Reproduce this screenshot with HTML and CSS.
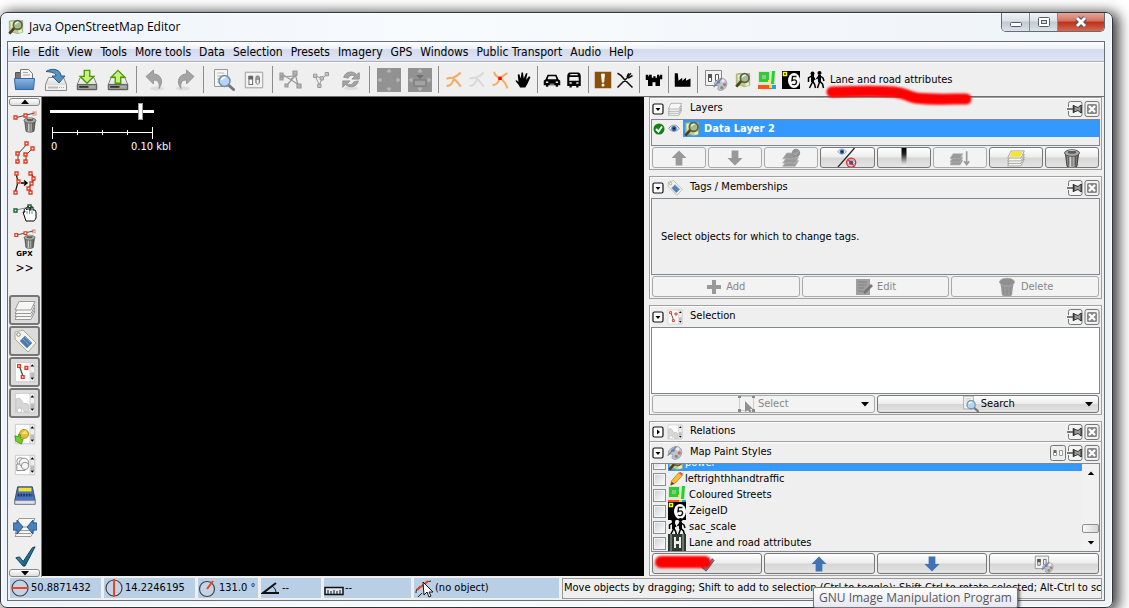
FILE: index.html
```html
<!DOCTYPE html>
<html lang="en">
<head>
<meta charset="utf-8">
<title>Java OpenStreetMap Editor</title>
<link rel="stylesheet" href="styles.css">
</head>
<body>
<svg class="sprite" aria-hidden="true">
  <defs>
    <linearGradient id="gBlue" x1="0" y1="0" x2="0" y2="1"><stop offset="0" stop-color="#8fb6e0"/><stop offset="1" stop-color="#4a80bd"/></linearGradient>
    <linearGradient id="gMetal" x1="0" y1="0" x2="1" y2="0"><stop offset="0" stop-color="#55574f"/><stop offset=".4" stop-color="#d8d9d2"/><stop offset="1" stop-color="#50524b"/></linearGradient>
    <linearGradient id="gDrive" x1="0" y1="0" x2="0" y2="1"><stop offset="0" stop-color="#fafafa"/><stop offset="1" stop-color="#c4c6c0"/></linearGradient>
    <linearGradient id="gFade" x1="0" y1="0" x2="0" y2="1"><stop offset="0" stop-color="#000"/><stop offset=".3" stop-color="#222"/><stop offset=".75" stop-color="#ccc"/><stop offset="1" stop-color="#fff"/></linearGradient>
    <linearGradient id="gTick" x1="0" y1="0" x2="1" y2="1"><stop offset="0" stop-color="#59b4d4"/><stop offset="1" stop-color="#043a5c"/></linearGradient>
  </defs>
  <symbol id="drive" viewBox="0 0 24 24"><path d="M4.500 9.500h15l3 7v6h-21v-6z" fill="url(#gDrive)" stroke="#777"/><path d="M1.500 17h21v5.500h-21z" fill="#9a9c96" stroke="#555"/><path d="M3.500 19.500h10" stroke="#333" stroke-width="2"/><path d="M15 19.500h6" stroke="#ddd" stroke-dasharray="1 1"/></symbol>
  <symbol id="folder" viewBox="0 0 24 24"><path d="M2.500 21V4.500h6l2 2h9V21z" fill="#777" stroke="#555"/><path d="M7.500 14V1.500h8l4 4V14z" fill="#f4f4f4" stroke="#777"/><path d="M10 4.500h5M10 7h7" stroke="#aaa"/><path d="M1.500 10.500h20l-1 11h-18z" fill="url(#gBlue)" stroke="#3465a4"/></symbol>
  <symbol id="opendrive" viewBox="0 0 24 24"><path d="M4.500 9.500h15l3 7v6h-21v-6z" fill="url(#gDrive)" stroke="#888"/><path d="M2 17h20v5H2z" fill="#f1f1f0"/><path d="M4 19.500h10" stroke="#bbb" stroke-width="2"/><path d="M15 19.500h6" stroke="#aaa" stroke-dasharray="1 1"/><path d="M2 3.500C9-1 17 2 17 8h4l-6 7-7-7h4c0-3-4-4-10-4.500z" fill="#5b91bd" stroke="#245a8e"/></symbol>
  <symbol id="down" viewBox="0 0 24 24"><use href="#drive"/><path d="M9 1.500h6v6.500h4.500l-7.500 7.500L4.500 8H9z" fill="#c6f17e" stroke="#4e9a06" stroke-width="1.500"/></symbol>
  <symbol id="up" viewBox="0 0 24 24"><use href="#drive"/><path d="M9 15.500h6V9h4.500L12 1.500 4.500 9H9z" fill="#c6f17e" stroke="#4e9a06" stroke-width="1.500"/></symbol>
  <symbol id="undo" viewBox="0 0 24 24"><ellipse cx="14" cy="20.500" rx="7" ry="2" fill="#ddd"/><path d="M3 8.500 10.500 2v4c7 0 11 7 5.500 14.500 1-6-1-8.500-5.500-8.500v4z" fill="#a4a4a4" stroke="#989898"/></symbol>
  <symbol id="magnifier" viewBox="0 0 24 24"><path d="M3.500 1.500h13v17h-13z" fill="#f5f5f5" stroke="#999"/><path d="M6 5h7M6 8h5M6 11h3M6 14h3" stroke="#bbb"/><path d="m17.500 17 5 4.500" stroke="#777" stroke-width="3" stroke-linecap="round"/><circle cx="13.500" cy="13" r="5.500" fill="#b8d4f0" stroke="#6b8fb5" stroke-width="1.500"/><path d="M10.500 12a3.500 3.500 0 0 1 4-2.500" stroke="#fff" stroke-width="1.500" fill="none"/></symbol>
  <symbol id="prefs" viewBox="0 0 24 24"><path d="M2.500 3.500h19v17h-19z" fill="#f2f2f2" stroke="#999"/><rect x="6.500" y="8" width="4" height="9" fill="#fff" stroke="#666"/><path d="M6 7.500h5v4H6z" fill="#666"/><rect x="14" y="7.500" width="4" height="9" rx="2" fill="#999" stroke="#777"/><path d="M15 12h2v4h-2z" fill="#fff"/></symbol>
  <symbol id="nodes1" viewBox="0 0 24 24"><g stroke="#999" stroke-width="1.200" fill="#b4b4b4"><path d="M3 9 16 8 8 17M3 6l17 11M16 5l3 12M12 11l6-4" fill="none"/><path d="M1 5h3v3H1zM1 9h3v3H1zM18 16h4v4h-4zM6 16h3v3H6zM14 3h4v4h-4z"/></g></symbol>
  <symbol id="nodes2" viewBox="0 0 24 24"><g stroke="#999" stroke-width="1.200" fill="#c4c4c4"><path d="m5 7 5 11 3-7 6-6M5 7l8 3" fill="none"/><path d="M3 5h4v4H3zM8 17h4v4H8zM17 3h4v4h-4zM11 8h4v4h-4z"/></g></symbol>
  <symbol id="refresh" viewBox="0 0 24 24"><ellipse cx="12" cy="21" rx="8" ry="2" fill="#ddd"/><path d="M4 9c2-7 11-7 14-3l3-2v7h-8l3-3c-3-2-6-1-7 2zM20 13c-1 7-10 8-14 4l-3 3v-7h8l-3 3c3 2 6 1 7-2z" fill="#a4a4a4" stroke="#929292"/></symbol>
  <symbol id="pan" viewBox="0 0 24 24"><path d="M0 0h24v24H0z" fill="#929292"/><path d="m12 1 2 3h-4zM12 23l2-3h-4zM1 12l3-2v4zM23 12l-3-2v4z" fill="#b4b4b4" stroke="#b4b4b4"/></symbol>
  <symbol id="panbox" viewBox="0 0 24 24"><use href="#pan"/><path d="M6 12h12v6H6z" fill="#a2a2a2" stroke="#747474"/><path d="M8 7h8l-4 4z" fill="#707070"/></symbol>
  <symbol id="way" viewBox="0 0 24 24"><path d="M20 3c-3 3-5 5-9 6M3 10c3 1 6-3 9 1 3 2 6 6 8 9M12 11c-2 4-3 8-9 8" fill="none" stroke="currentColor" stroke-width="2.500"/></symbol>
  <symbol id="hand" viewBox="0 0 24 24"><path d="M8 22c-1-4-5-6-6-9 1-2 3 0 4 2L5 5l2-1 2 6 1-8h2l1 8 3-7h2l-2 9 4-5 2 1-4 9-3 5z" fill="#000"/></symbol>
  <symbol id="car" viewBox="0 0 24 24"><path d="M6 5h12l2.500 6 2.500 2v6h-3v2h-3v-2H7v2H4v-2H1v-6l2.500-2z" fill="#000"/><path d="M7.500 7h9l1.500 4H6zM4 14h3v2H4zM17 14h3v2h-3zM9 17h6v1H9z" fill="#eee"/></symbol>
  <symbol id="bus" viewBox="0 0 24 24"><path d="M6 2h12c2 0 3 3 3 5v13h-3v2h-3v-2H9v2H6v-2H3V7c0-2 1-5 3-5z" fill="#000"/><path d="M7 4h10v1.500H7zM6 8h12l.5 5h-13zM6 15h3v2H6zM15 15h3v2h-3z" fill="#eee"/></symbol>
  <symbol id="warn" viewBox="0 0 24 24"><path d="M1 1h22v22H1z" fill="#8a4f0b"/><path d="M10 4h4l-1 11h-2z" fill="#fff" stroke="#fff"/><circle cx="12" cy="18.500" r="2" fill="#fff"/></symbol>
  <symbol id="food" viewBox="0 0 24 24"><path d="M2 3c5 2 7 5 9 8l11 11M2 22 17 7M17 3l-2 4 2 2 5-3M20 3l-4 4" fill="none" stroke="#111" stroke-width="2"/></symbol>
  <symbol id="castle" viewBox="0 0 24 24"><path d="M1 5h3v2h1V5h4v4h2V7h3v2h2V5h3v2h1V5h3v6h-3v9h-6v-5h-4v5H4v-8H1z" fill="#000"/></symbol>
  <symbol id="factory" viewBox="0 0 24 24"><path d="M1 21V3h4l1 10 5-4v4l5-4v4l6-3v11z" fill="#000"/></symbol>
  <symbol id="palette" viewBox="0 0 24 24"><path d="M10 3c7-3 13 2 12 9-1 8-10 12-14 8-2-2 2-4 0-6-2-1-6 1-6-3 0-3 4-6 8-8z" fill="#bcc2da" stroke="#8088a0"/><circle cx="9" cy="8" r="2.500" fill="#5b7ed0"/><circle cx="16" cy="6" r="2.500" fill="#eee"/><circle cx="18.500" cy="12" r="2.500" fill="#d07040"/><circle cx="14" cy="17" r="2.500" fill="#789c50"/><path d="M1 16 14 2" stroke="#808080" stroke-width="2"/></symbol>
  <symbol id="stylepref" viewBox="0 0 24 24"><path d="M1.500 2.500h16v15h-16z" fill="#f2f2f2" stroke="#888"/><path d="M4.500 6.500h3v7h-3zM11.500 6.500h3v6h-3z" fill="#fff" stroke="#555"/><path d="M4 6h4v4H4z" fill="#555"/><use href="#palette" x="9" y="9" width="15" height="15"/></symbol>
  <symbol id="josm" viewBox="0 0 24 24"><path d="m2 3 7-1 6 2 7-2v18l-8 2-6-2-6 2z" fill="#b9d090" stroke="#8f9f68"/><path d="m4 5 4-1 1 7-4 2zM15 14l6 2v4l-5 1z" fill="#e8f0c0"/><path d="M2 22 10 13" stroke="#543c1c" stroke-width="4"/><circle cx="14.500" cy="9" r="6.500" fill="#9fc08a" stroke="#665c47" stroke-width="2.500"/><path d="M11 8a4 4 0 0 1 5-3" stroke="#e4f4ff" stroke-width="2" fill="none"/></symbol>
  <symbol id="coloured" viewBox="0 0 18 18"><path d="M0 0h18v14H0z" fill="#dfe8d8"/><path d="M2.500 2.500h7v7h-7z" fill="#8cc88c" stroke="#2ecc33" stroke-width="3"/><path d="M14 0h3l-1 13h-3z" fill="#2ecc33"/><path d="M0 14h18v4H0z" fill="#ff5518"/><path d="M13 14h5v4h-5z" fill="#20a0f0"/><path d="M10 9h2v2h-2zM11 14h3v3h-3z" fill="#ffe900"/></symbol>
  <symbol id="zeige" viewBox="0 0 18 18"><path d="M0 0h18v18H0z" fill="#000"/><ellipse cx="12" cy="9.500" rx="6" ry="7.500" fill="#fff"/><path d="M1.500 1.500h3v3h-3z" fill="#000" stroke="#ff0" stroke-width="1.500"/><path d="M14.500 5.500h-4l-.5 4c3-1.500 5 0 4.500 2-.5 2.500-3 2.500-4.500 1.500" fill="none" stroke="#111" stroke-width="1.400"/></symbol>
  <symbol id="walkers" viewBox="0 0 18 18"><g fill="none" stroke="#000" stroke-width="1.500"><path d="M5.500 5v6l-3 6M5.500 10l2 3 1 4M4.500 5 1.500 7v4M6 5l2 4M12.500 4v7l-2 6M12.500 10l3 3 1 4M12 5 9.500 8M13 5l3 2 1 3"/></g><circle cx="5.500" cy="2.500" r="2"/><circle cx="12.500" cy="2" r="2"/><path d="M4 4h3v7H4zM11 4h3v7h-3z"/></symbol>
  <symbol id="road" viewBox="0 0 18 18"><path d="M0 0h18v18H0z" fill="#2d3a30"/><path d="M3 0v18M15 0v18" stroke="#a9b2ac"/><path d="M6 3h2v4h3V3h2v11h-2V10H8v4H6z" fill="#e9ece9"/></symbol>
  <symbol id="pencil" viewBox="0 0 18 18"><path d="m3 16 1-5L12 2l4 3-8 9z" fill="#f8b93c" stroke="#c98a1c"/><path d="m12 2 4 3 1-2-3-2z" fill="#e05050"/><path d="m3 16 1-4 3 2z" fill="#444"/></symbol>
  <symbol id="layers" viewBox="0 0 24 24"><g fill="#f6f6f5" stroke="#999a96"><path d="M6 13.500h16l-4 8H2z"/><path d="M6 10.500h16l-4 8H2z"/><path d="M6 7.500h16l-4 8H2z"/><path d="M6 3.500h16l-4 8.500H2z"/></g></symbol>
  <symbol id="newlayer" viewBox="0 0 24 24"><use href="#layers"/><path d="M7 4.500h13l-3 6H4z" fill="#f4e52d"/></symbol>
  <symbol id="layersgrey" viewBox="0 0 24 24"><g fill="#999" stroke="#b5b5b5"><path d="M7 15h14l-4 7H2z"/><path d="M7 11h14l-4 7H2z"/><path d="M7 6h14l-4 7H2z"/></g></symbol>
  <symbol id="layermerge" viewBox="0 0 24 24"><use href="#layersgrey"/><circle cx="18" cy="6" r="5" fill="#929292"/><path d="m15 6 2 2 4-4" stroke="#aaa" stroke-width="1.500" fill="none"/></symbol>
  <symbol id="layerdown" viewBox="0 0 24 24"><use href="#layersgrey" x="-2" y="2" width="20" height="20"/><path d="M20 4v15M17 16l3 4 3-4" stroke="#999" stroke-width="2" fill="none"/></symbol>
  <symbol id="tag" viewBox="0 0 24 24"><path d="M2 3 10 1l13 13-8 9L2 10z" fill="#f3f3ea" stroke="#a9aa9b"/><circle cx="5.500" cy="5.500" r="1.800" fill="#fff" stroke="#888"/><path d="m12 7 7 7-5 5-7-7z" fill="#4d7ab5" stroke="#7799c4"/><path d="m10 10 7 7M12 8l6 6" stroke="#a8c0df" stroke-dasharray="1 1"/></symbol>
  <symbol id="pane" viewBox="0 0 24 24"><path d="M1.500 1.500h21v21h-21z" fill="#fff" stroke="#c9c9c9"/><path d="M17.500 1.500h5v21h-5z" fill="#eee" stroke="#ccc"/><path d="M18 6h4l-2-2.500zM18 18h4l-2 2.500z" fill="#000"/><path d="M18 12.500h4v5h-4z" fill="#bbb"/></symbol>
  <symbol id="selpane" viewBox="0 0 24 24"><use href="#pane"/><path d="m6 6 4 11" stroke="#555" stroke-width="1.500"/><g fill="#fff" stroke="#e33a1f" stroke-width="1.500"><path d="M4 4h3v3H4zM8 16h3v3H8zM12 6h3v3h-3z"/></g></symbol>
  <symbol id="relpane" viewBox="0 0 24 24"><use href="#pane"/><path d="M2 8c4-3 6 0 7 3s5 0 7 3v8h-5c0-5-6-6-8-2l-1 2z" fill="#d6d6d6" stroke="#c4c4c4"/><circle cx="6" cy="20" r="2.500" fill="#fff" stroke="#c4c4c4"/></symbol>
  <symbol id="userpane" viewBox="0 0 24 24"><use href="#pane"/><circle cx="11" cy="12" r="5" fill="#e8bc30" stroke="#b88c18"/><path d="m8 12 4-4 3 4" fill="#f8e08c"/><path d="M5 12v3l-4-1 1 6 6 3 2-5-3-1v-4z" fill="#71c837" stroke="#4e9a06"/></symbol>
  <symbol id="filterpane" viewBox="0 0 24 24"><use href="#pane"/><g fill="#f5f5f5" stroke="#888"><circle cx="7" cy="8" r="4"/><path d="M3 11h9v7H3z"/><circle cx="11" cy="9.500" r="5"/><circle cx="12" cy="13" r="4"/></g></symbol>
  <symbol id="trash" viewBox="0 0 24 24"><path d="M4 6h16l-2 16c-3 2-9 2-12 0z" fill="url(#gMetal)" stroke="#333"/><path d="M8 10v11M12 10v12M16 10v11" stroke="#444"/><ellipse cx="12" cy="6" rx="9" ry="4" fill="#a9aba4" stroke="#444"/><ellipse cx="12" cy="5" rx="5" ry="2" fill="#5a5c56"/><path d="M9 3h6" stroke="#ddd"/></symbol>
  <symbol id="trashgrey" viewBox="0 0 24 24"><path d="M4 6h16l-2 16c-3 2-9 2-12 0z" fill="#999"/><ellipse cx="12" cy="6" rx="9" ry="4.500" fill="#8f8f8f" stroke="#a5a5a5"/><path d="M8 12v9M12 12v10M16 12v9" stroke="#888"/></symbol>
  <symbol id="arrow" viewBox="0 0 24 24"><path d="m12 2 10 10h-5.500v10h-9V12H2z" fill="currentColor"/></symbol>
  <symbol id="eye" viewBox="0 0 16 12"><path d="M1 6c4-6 10-6 14 0-4 5-10 5-14 0z" fill="#dce8f4" stroke="#6b7d90"/><circle cx="8" cy="6" r="3.500" fill="#3465a4"/><circle cx="8" cy="6" r="1.500" fill="#0b1f40"/></symbol>
  <symbol id="visibility" viewBox="0 0 24 24"><use href="#eye" x="0" y="0" width="12" height="9"/><path d="M21 0 1 23" stroke="#222" stroke-width="1.500"/><use href="#eye" x="11" y="13" width="12" height="9"/><circle cx="17" cy="17.500" r="5.500" fill="none" stroke="#e22" stroke-width="1.500"/><path d="m13 14 7 7" stroke="#e22" stroke-width="1.500"/></symbol>
  <symbol id="opacity" viewBox="0 0 24 24"><path d="M9 0h6v24H9z" fill="url(#gFade)"/></symbol>
  <symbol id="plus" viewBox="0 0 16 16"><path d="M6 1h4v5h5v4h-5v5H6v-5H1V6h5z" fill="#999"/></symbol>
  <symbol id="editgrey" viewBox="0 0 18 18"><path d="M1 1h14v16H1z" fill="#a0a0a0"/><path d="M3 4h9M3 7h8M3 10h6M3 13h5" stroke="#808080"/><path d="m8 14 8-8 2 2-8 8z" fill="#777"/></symbol>
  <symbol id="selectgrey" viewBox="0 0 18 18"><path d="M1.500 1.500h14v14h-14z" fill="none" stroke="#aaa" stroke-dasharray="1 1"/><path d="M0 0h3v3H0zM14 0h3v3h-3zM0 14h3v3H0zM14 14h3v3h-3z" fill="#8a8a8a"/><path d="m7 6 8 8h-3l2 4-2 1-2-4-3 2z" fill="#909090"/></symbol>
  <symbol id="pin" viewBox="0 0 16 16"><path d="M1.500 6V2.500a2 2 0 0 1 2-2h9.500a2 2 0 0 1 2 2v11a2 2 0 0 1-2 2H3.500a2 2 0 0 1-2-2V10" fill="#f4f4f4" stroke="#777"/><path d="M0 8h7" stroke="#777" stroke-width="2"/><path d="M6.500 4v8M14 4v8" stroke="#333" stroke-width="1.500"/><path d="m7 5 4 1.500L14 4v8l-3-2.500L7 11z" fill="#999" stroke="#333"/></symbol>
  <symbol id="close" viewBox="0 0 16 16"><rect x="1" y=".5" width="14" height="15" rx="2" fill="#f2f2f2" stroke="#777"/><rect x="3" y="3" width="10" height="10" rx="1.500" fill="#888"/><path d="m5 5 6 6M11 5l-6 6" stroke="#fff" stroke-width="2.200"/></symbol>
  <symbol id="miniprefs" viewBox="0 0 16 16"><rect x=".5" y=".5" width="15" height="15" rx="2" fill="#eee" stroke="#777"/><path d="M3.500 5.500h3v5h-3zM9.500 5.500h3v5h-3z" fill="#fff" stroke="#999"/><path d="M4 5h2v3H4z" fill="#666"/></symbol>
  <symbol id="open" viewBox="0 0 12 12"><rect x="1" y="1" width="10" height="10" rx="1.500" fill="#fff" stroke="#111" stroke-width="1.200"/><path d="M3.500 5h5L6 8z"/></symbol>
  <symbol id="closed" viewBox="0 0 12 12"><rect x="1" y="1" width="10" height="10" rx="1.500" fill="#fff" stroke="#111" stroke-width="1.200"/><path d="M5 3.500v5L8 6z"/></symbol>
  <symbol id="ok" viewBox="0 0 12 12"><circle cx="6" cy="6" r="5.500" fill="#128212"/><path d="m3 6 2.500 2.500L9 3.500" stroke="#fff" stroke-width="2" fill="none"/></symbol>
  <symbol id="tri" viewBox="0 0 10 6"><path d="M1 1h8L5 5.500z"/></symbol>
  <symbol id="deltrash" viewBox="0 0 24 24"><path d="m2 7 11-3 9-2" stroke="#444" fill="none"/><g fill="#fff" stroke="#e33a1f" stroke-width="1.300"><path d="M1 5h3v3H1zM11 3h3v3h-3z"/><path d="M20 1h3v3h-3z" opacity=".4"/></g><use href="#trash" x="9" y="4" width="16" height="19"/></symbol>
  <symbol id="parallel" viewBox="0 0 24 24"><path d="M5 21v-8l9-10M13 21v-7l6-6" stroke="#444" fill="none"/><g fill="#fff" stroke="#e33a1f" stroke-width="1.400"><path d="M3 19h3v3H3zM3 11h3v3H3zM12 1h3v3h-3zM11 19h3v3h-3zM11 12h3v3h-3zM18 6h3v3h-3z"/></g></symbol>
  <symbol id="improve" viewBox="0 0 24 24"><path d="m3 2 2 9-3 11M18 2l3 6-3 5-2 4 2 4" stroke="#111" stroke-width="1.200" fill="none"/><path d="M8 12h5M11 9.500l3 2.500-3 2.500" stroke="#000" stroke-width="1.500" fill="none"/><g fill="#fff" stroke="#e33a1f" stroke-width="1.300"><path d="M2 1h3v3H2zM4 9h3v3H4zM1 20h3v3H1zM16 1h3v3h-3zM19 6h3v3h-3zM17 11h3v3h-3zM14 16h3v3h-3zM16 20h3v3h-3z"/></g></symbol>
  <symbol id="grab" viewBox="0 0 24 24"><path d="m3 9 14-3" stroke="#888"/><path d="M1 8h3v3H1zM15 4h3v3h-3z" fill="#fff" stroke="#163" stroke-width="1.400"/><path d="M11 9c1-2 2-2 3 0V6h2v3h2V6h2v3h2l1 2v6c-1 2-2 3-2 3h-8l-2-6-1-3h2z" fill="#fff" stroke="#000"/><path d="M14 10v3M16.500 9v4M19 9v4" stroke="#184" stroke-width=".7"/></symbol>
  <symbol id="notes" viewBox="0 0 24 24"><path d="M4 2h16l3 14v5H1v-5z" fill="#4a73bc" stroke="#345"/><path d="M1 17h22v4H1z" fill="#dfe3ea" stroke="#889"/><path d="M5 3h14v4H5z" fill="#f0e425"/><path d="M4 11h16" stroke="#1d3764" stroke-width="3" stroke-dasharray="2 1"/></symbol>
  <symbol id="changes" viewBox="0 0 24 24"><use href="#layers"/><path d="M0 8h4V5l6 7-6 7v-4H0zM24 8h-4V5l-6 7 6 7v-4h4z" fill="#4a80bd" stroke="#2a5a94"/></symbol>
  <symbol id="tick" viewBox="0 0 24 24"><path d="m2 14 4-1 4 5L20 3l3-1-11 21h-2z" fill="url(#gTick)" stroke="#043a5c"/></symbol>
  <symbol id="lat" viewBox="0 0 20 20"><circle cx="10" cy="10" r="8" fill="#c4d3e6" stroke="#444" stroke-width="1.200"/><path d="M2 10h16" stroke="#ef4422" stroke-width="2"/></symbol>
  <symbol id="lon" viewBox="0 0 20 20"><circle cx="10" cy="10" r="8" fill="#c4d3e6" stroke="#444" stroke-width="1.200"/><path d="M10 1v18" stroke="#ef4422" stroke-width="2"/></symbol>
  <symbol id="heading" viewBox="0 0 20 20"><circle cx="9" cy="11" r="7.500" fill="#c4d3e6" stroke="#444" stroke-width="1.200"/><path d="m9 11 6-8" stroke="#ef4422" stroke-width="2"/></symbol>
  <symbol id="angle" viewBox="0 0 20 20"><path d="M15 5 2 15h16" fill="none" stroke="#111" stroke-width="2"/><path d="M11 8c3 2 4 4 4 7" fill="none" stroke="#111"/></symbol>
  <symbol id="ruler" viewBox="0 0 20 20"><path d="M1 9.500h18v7H1z" fill="#dfe6f0" stroke="#111" stroke-width="1.500"/><path d="M4 16v-4M7 16v-3M10 16v-4M13 16v-3M16 16v-4" stroke="#111"/></symbol>
  <symbol id="cursor" viewBox="0 0 20 20"><path d="M2 15c0-5 3-6 6-7s5-5 9-5M4 19c1-2 3-2 4-4" fill="none" stroke="#222"/><path d="M3 12 14 3" stroke="#ef4422" stroke-width="2"/><path d="m9 4 1 13 3-3 2 5 2-1-2-4h4z" fill="#fff" stroke="#111"/></symbol>
</svg>

<div class="desktop">
  <div class="window">
    <header class="titlebar">
      <svg class="i16"><use href="#josm"/></svg>
      <h1>Java OpenStreetMap Editor</h1>
      <div class="caption">
        <button type="button" aria-label="Minimize"><svg class="cap" viewBox="0 0 14 12"><rect x="1.500" y="6.500" width="11" height="4" rx="1" fill="#fff" stroke="#555a66"/></svg></button>
        <button type="button" aria-label="Maximize"><svg class="cap" viewBox="0 0 14 12"><rect x="1.500" y="1.500" width="11" height="9" rx="1" fill="#fff" stroke="#555a66"/><rect x="4.500" y="4.500" width="5" height="3" fill="#d5dae3" stroke="#555a66"/></svg></button>
        <button type="button" class="quit" aria-label="Close"><svg class="cap" viewBox="0 0 14 12"><path d="m3 2 8 8M11 2l-8 8" stroke="#4b4f5b" stroke-width="5"/><path d="m3 2 8 8M11 2l-8 8" stroke="#fff" stroke-width="3"/></svg></button>
      </div>
    </header>

    <div class="client">
      <nav class="menubar">
        <button type="button">File</button><button type="button">Edit</button><button type="button">View</button><button type="button">Tools</button><button type="button">More tools</button><button type="button">Data</button><button type="button">Selection</button><button type="button">Presets</button><button type="button">Imagery</button><button type="button">GPS</button><button type="button">Windows</button><button type="button">Public Transport</button><button type="button">Audio</button><button type="button">Help</button>
      </nav>

      <div class="toolbar" role="toolbar" aria-label="Main toolbar">
        <div class="group wide">
          <button type="button" aria-label="Open"><svg class="i24"><use href="#folder"/></svg></button>
          <button type="button" aria-label="Save"><svg class="i24"><use href="#opendrive"/></svg></button>
          <button type="button" aria-label="Download"><svg class="i22"><use href="#down"/></svg></button>
          <button type="button" aria-label="Upload"><svg class="i22"><use href="#up"/></svg></button>
        </div>
        <div class="group mid">
          <button type="button" aria-label="Undo"><svg class="i24"><use href="#undo"/></svg></button>
          <button type="button" aria-label="Redo"><svg class="i24 mirror"><use href="#undo"/></svg></button>
        </div>
        <div class="group wide">
          <button type="button" aria-label="Search"><svg class="i24"><use href="#magnifier"/></svg></button>
          <button type="button" aria-label="Preferences"><svg class="i22"><use href="#prefs"/></svg></button>
        </div>
        <div class="group mid">
          <button type="button" aria-label="Split way"><svg class="i24"><use href="#nodes1"/></svg></button>
          <button type="button" aria-label="Combine way"><svg class="i20"><use href="#nodes2"/></svg></button>
          <button type="button" aria-label="Update data"><svg class="i22"><use href="#refresh"/></svg></button>
        </div>
        <div class="group wide">
          <button type="button" aria-label="Move"><svg class="i24"><use href="#pan"/></svg></button>
          <button type="button" aria-label="Move box"><svg class="i24"><use href="#panbox"/></svg></button>
        </div>
        <div class="group edit">
          <button type="button" aria-label="Junction"><svg class="i20 orange"><use href="#way"/></svg></button>
          <button type="button" aria-label="Junction off"><svg class="i20 pale"><use href="#way"/></svg></button>
          <button type="button" aria-label="Junction node"><svg class="i20 orange" viewBox="0 0 24 24"><path d="M5 2c0 5 4 5 6 8M11 10c4-1 6-5 10-6M12 10c-2 4-3 8-9 8M12 10c4 2 7 6 9 12" fill="none" stroke="currentColor" stroke-width="2.500"/><path d="M10 8h4v4h-4z" fill="#f00"/></svg></button>
          <button type="button" aria-label="Hand"><svg class="i18"><use href="#hand"/></svg></button>
        </div>
        <div class="group small">
          <button type="button" aria-label="Car"><svg class="i18"><use href="#car"/></svg></button>
          <button type="button" aria-label="Bus"><svg class="i18"><use href="#bus"/></svg></button>
        </div>
        <div class="group small">
          <button type="button" aria-label="Hazard"><svg class="i18"><use href="#warn"/></svg></button>
          <button type="button" aria-label="Food"><svg class="i18"><use href="#food"/></svg></button>
        </div>
        <div class="group small"><button type="button" aria-label="Castle"><svg class="i18"><use href="#castle"/></svg></button></div>
        <div class="group small"><button type="button" aria-label="Factory"><svg class="i18"><use href="#factory"/></svg></button></div>
        <div class="group last">
          <button type="button" class="first" aria-label="Style preferences"><svg class="i24"><use href="#stylepref"/></svg></button>
          <button type="button" aria-label="Map style"><svg class="i16"><use href="#josm"/></svg></button>
          <button type="button" aria-label="Coloured Streets"><svg class="i18"><use href="#coloured"/></svg></button>
          <button type="button" aria-label="ZeigeID"><svg class="i18"><use href="#zeige"/></svg></button>
          <button type="button" class="labelled"><svg class="i18"><use href="#walkers"/></svg>Lane and road attributes</button>
        </div>
        <svg class="scribble" viewBox="0 0 152 24" aria-hidden="true"><path d="M9 9c25-1 50-1 62 0s12 4 22 6c15 2 35 1 50 1" fill="none" stroke="#f00" stroke-width="11" stroke-linecap="round" stroke-linejoin="round"/></svg>
      </div>

      <main class="work">
        <aside class="modes">
          <button type="button" class="scroller" aria-label="Scroll up"><svg class="tri flip"><use href="#tri"/></svg></button>
          <button type="button" class="mode" aria-label="Delete"><svg class="i24"><use href="#deltrash"/></svg></button>
          <button type="button" class="mode" aria-label="Parallel"><svg class="i24"><use href="#parallel"/></svg></button>
          <button type="button" class="mode" aria-label="Improve accuracy"><svg class="i24"><use href="#improve"/></svg></button>
          <button type="button" class="mode" aria-label="Extrude"><svg class="i24"><use href="#grab"/></svg></button>
          <button type="button" class="mode gpx"><svg class="i22"><use href="#deltrash"/></svg><span>GPX</span></button>
          <button type="button" class="more">&gt;&gt;</button>
          <div class="toggles">
            <button type="button" class="on" aria-label="Layers"><svg class="i24"><use href="#layers"/></svg></button>
            <button type="button" class="on" aria-label="Tags"><svg class="i24"><use href="#tag"/></svg></button>
            <button type="button" class="on" aria-label="Selection"><svg class="i22"><use href="#selpane"/></svg></button>
            <button type="button" class="on" aria-label="Relations"><svg class="i22"><use href="#relpane"/></svg></button>
            <button type="button" aria-label="Authors"><svg class="i22"><use href="#userpane"/></svg></button>
            <button type="button" aria-label="Filter"><svg class="i22"><use href="#filterpane"/></svg></button>
            <button type="button" aria-label="History"><svg class="i22"><use href="#notes"/></svg></button>
            <button type="button" aria-label="Changesets"><svg class="i24"><use href="#changes"/></svg></button>
            <button type="button" class="cut" aria-label="Validate"><svg class="i22"><use href="#tick"/></svg></button>
          </div>
          <button type="button" class="scroller" aria-label="Scroll down"><svg class="tri"><use href="#tri"/></svg></button>
        </aside>

        <section class="map" aria-label="Map">
          <input type="range" class="zoom" min="0" max="100" value="89" aria-label="Zoom">
          <svg class="scale" viewBox="0 0 101 12"><path d="M.5 0v12M100.500 0v12M0 5.500h101M25.500 3v5M50.500 3v5M75.500 3v5" stroke="#fff" fill="none"/></svg>
          <div class="scale-text"><span>0</span><span>0.10 kbl</span></div>
        </section>

        <aside class="panels">
          <section class="panel">
            <header><svg class="i12"><use href="#open"/></svg><svg class="i16"><use href="#layers"/></svg><h2>Layers</h2><button type="button" aria-label="Pin"><svg class="i16"><use href="#pin"/></svg></button><button type="button" aria-label="Close"><svg class="i16"><use href="#close"/></svg></button></header>
            <div class="box layer-list"><div class="layer"><svg class="i12"><use href="#ok"/></svg><svg class="eye"><use href="#eye"/></svg><div class="layer-name"><svg class="i16"><use href="#josm"/></svg>Data Layer 2</div></div></div>
            <div class="actions eight">
              <button type="button" disabled aria-label="Up"><svg class="i18 grey"><use href="#arrow"/></svg></button>
              <button type="button" disabled aria-label="Down"><svg class="i18 grey flip"><use href="#arrow"/></svg></button>
              <button type="button" disabled aria-label="Merge"><svg class="i20"><use href="#layermerge"/></svg></button>
              <button type="button" aria-label="Visibility"><svg class="i20"><use href="#visibility"/></svg></button>
              <button type="button" aria-label="Opacity"><svg class="i20"><use href="#opacity"/></svg></button>
              <button type="button" disabled aria-label="Order"><svg class="i20"><use href="#layerdown"/></svg></button>
              <button type="button" aria-label="New layer"><svg class="i20"><use href="#newlayer"/></svg></button>
              <button type="button" aria-label="Delete"><svg class="i20"><use href="#trash"/></svg></button>
            </div>
          </section>

          <section class="panel tags">
            <header><svg class="i12"><use href="#open"/></svg><svg class="i16"><use href="#tag"/></svg><h2>Tags / Memberships</h2><button type="button" aria-label="Pin"><svg class="i16"><use href="#pin"/></svg></button><button type="button" aria-label="Close"><svg class="i16"><use href="#close"/></svg></button></header>
            <div class="box message">Select objects for which to change tags.</div>
            <div class="actions three">
              <button type="button" disabled><svg class="i16"><use href="#plus"/></svg>Add</button>
              <button type="button" disabled><svg class="i18"><use href="#editgrey"/></svg>Edit</button>
              <button type="button" disabled><svg class="i20"><use href="#trashgrey"/></svg>Delete</button>
            </div>
          </section>

          <section class="panel selection">
            <header><svg class="i12"><use href="#open"/></svg><svg class="i16"><use href="#selpane"/></svg><h2>Selection</h2><button type="button" aria-label="Pin"><svg class="i16"><use href="#pin"/></svg></button><button type="button" aria-label="Close"><svg class="i16"><use href="#close"/></svg></button></header>
            <div class="box white"></div>
            <div class="actions two">
              <button type="button" disabled><span><svg class="i18"><use href="#selectgrey"/></svg>Select</span><svg class="tri"><use href="#tri"/></svg></button>
              <button type="button"><span><svg class="i18"><use href="#magnifier"/></svg>Search</span><svg class="tri"><use href="#tri"/></svg></button>
            </div>
          </section>

          <div class="stack">
            <section class="panel folded">
              <header><svg class="i12"><use href="#closed"/></svg><svg class="i16"><use href="#relpane"/></svg><h2>Relations</h2><button type="button" aria-label="Pin"><svg class="i16"><use href="#pin"/></svg></button><button type="button" aria-label="Close"><svg class="i16"><use href="#close"/></svg></button></header>
            </section>
            <section class="panel styles">
              <header><svg class="i12"><use href="#open"/></svg><svg class="i16"><use href="#palette"/></svg><h2>Map Paint Styles</h2><button type="button" aria-label="Settings"><svg class="i16"><use href="#miniprefs"/></svg></button><button type="button" aria-label="Pin"><svg class="i16"><use href="#pin"/></svg></button><button type="button" aria-label="Close"><svg class="i16"><use href="#close"/></svg></button></header>
              <div class="box style-box">
                <div class="style-list">
                  <label class="current"><input type="checkbox"><span><svg class="i16"><use href="#josm"/></svg>power</span></label>
                  <label><input type="checkbox"><span><svg class="i16"><use href="#pencil"/></svg>leftrighthhandtraffic</span></label>
                  <label><input type="checkbox"><span class="spaced"><svg class="i18"><use href="#coloured"/></svg>Coloured Streets</span></label>
                  <label><input type="checkbox"><span class="spaced"><svg class="i18"><use href="#zeige"/></svg>ZeigeID</span></label>
                  <label><input type="checkbox"><span class="spaced"><svg class="i18"><use href="#walkers"/></svg>sac_scale</span></label>
                  <label><input type="checkbox"><span class="spaced"><svg class="i18"><use href="#road"/></svg>Lane and road attributes</span></label>
                </div>
                <div class="scrollbar"><button type="button" aria-label="Scroll up"><svg class="tri-s flip"><use href="#tri"/></svg></button><i class="thumb"></i><button type="button" aria-label="Scroll down"><svg class="tri-s"><use href="#tri"/></svg></button></div>
              </div>
              <div class="actions four">
                <button type="button" class="marked" aria-label="Toggle"><svg class="i16" viewBox="0 0 18 18"><path d="m3 11 4 3 8-11 2 2-9 12-5-4z" fill="#7a7f8c" stroke="#4d5260"/></svg><svg class="blot" viewBox="0 0 60 14"><path d="M7 7h44" stroke="#f00" stroke-width="12" stroke-linecap="round"/></svg></button>
                <button type="button" aria-label="Up"><svg class="i18 blue"><use href="#arrow"/></svg></button>
                <button type="button" aria-label="Down"><svg class="i18 blue flip"><use href="#arrow"/></svg></button>
                <button type="button" aria-label="Preferences"><svg class="i20"><use href="#stylepref"/></svg></button>
              </div>
            </section>
          </div>
        </aside>
      </main>

      <footer class="status">
        <div class="cell c-lat"><svg class="i20"><use href="#lat"/></svg>50.8871432</div>
        <div class="cell c-lat"><svg class="i20"><use href="#lon"/></svg>14.2246195</div>
        <div class="cell c-head"><svg class="i20"><use href="#heading"/></svg>131.0 °</div>
        <div class="cell c-head"><svg class="i20"><use href="#angle"/></svg>--</div>
        <div class="cell c-dist"><svg class="i20"><use href="#ruler"/></svg>--</div>
        <div class="cell c-name"><svg class="i20"><use href="#cursor"/></svg>(no object)</div>
        <div class="help">Move objects by dragging; Shift to add to selection (Ctrl to toggle); Shift-Ctrl to rotate selected; Alt-Ctrl to scale selected</div>
      </footer>
    </div>
  </div>
  <div class="tooltip" role="tooltip">GNU Image Manipulation Program</div>
</div>
</body>
</html>
```
FILE: styles.css
```css
* { box-sizing: border-box; }
body { margin: 0; background: #fff; color: #000; font: 11px/16px "DejaVu Sans Condensed", "Noto Sans", sans-serif; }
button { margin: 0; padding: 0; border: 0; background: none; color: inherit; font: inherit; display: flex; align-items: center; justify-content: center; }
h1, h2 { margin: 0; font-weight: normal; font-size: 11px; }
svg { display: block; flex: none; }
.sprite { position: absolute; width: 0; height: 0; }

.i12 { width: 12px; height: 12px; }
.i16 { width: 16px; height: 16px; }
.i18 { width: 18px; height: 18px; }
.i20 { width: 20px; height: 20px; }
.i22 { width: 22px; height: 22px; }
.i24 { width: 24px; height: 24px; }
.eye { width: 12px; height: 9px; }
.cap { width: 14px; height: 12px; }
.tri { width: 10px; height: 6px; }
.tri-s { width: 8px; height: 5px; }
.flip { transform: scaleY(-1); }
.mirror { transform: scaleX(-1); }
.orange { color: #f6ac60; }
.pale { color: #d9d9d9; }
.grey { color: #999; }
.blue { color: #3f73b5; }

.desktop { position: relative; min-height: 100vh; padding: 12px 16px 0 0; overflow: hidden; display: flex; }
.window { flex: 1; min-width: 0; display: flex; flex-direction: column; padding: 0 7px 6px 6px; border: 1px solid #33363b; border-radius: 7px; background: linear-gradient(90deg, #eef4fb, #f8fbfe 40%, #eef3f8); box-shadow: inset 0 0 0 1px #fff, 4px 2px 13px 2px rgba(0, 0, 0, .75); }

.titlebar { height: 28px; display: flex; align-items: center; gap: 5px; padding-left: 1px; }
.titlebar h1 { flex: 1; font: 12px/16px "Open Sans", sans-serif; }
.caption { align-self: flex-start; display: flex; border: 1px solid #666b75; border-top: 0; border-radius: 0 0 5px 5px; overflow: hidden; }
.caption button { width: 28px; height: 18px; border-right: 1px solid #858b96; background: linear-gradient(#f0f3f7, #dbe0e7 45%, #c3c9d2 50%, #dce2ea); }
.caption .quit { width: 46px; border-right: 0; background: linear-gradient(#e6a79b, #d2705e 45%, #bc2f18 50%, #d46a50); }

.client { flex: 1; display: flex; flex-direction: column; border: 1px solid #6b7075; background: #efefef; }
.menubar { height: 20px; display: flex; align-items: center; gap: 8px; padding: 0 4px; background: linear-gradient(#fff, #eef0f8 35%, #d4daec 40%, #dfe5f5); border-bottom: 1px solid #aaaeb8; font-size: 12px; }

.toolbar { position: relative; height: 35px; display: flex; align-items: center; padding-left: 1px; border-bottom: 1px solid #6e6e6e; border-top: 1px solid #fff; }
.group { display: flex; align-items: center; }
.group + .group::before { content: ""; width: 1px; height: 27px; margin: 0 3px; background: #8c8c8c; }
.wide button { width: 31px; }
.mid button { width: 30px; }
.edit button { width: 23px; }
.small button { width: 22px; }
.last button { width: 24px; }
.last .first { width: 30px; }
.last .labelled { width: auto; gap: 5px; padding-left: 4px; }
.scribble { position: absolute; left: 815px; top: 20px; width: 152px; height: 24px; z-index: 2; filter: blur(1px); }

.work { flex: 1; display: grid; grid-template-columns: 34px minmax(0, 1fr) 460px; }
.modes { display: flex; flex-direction: column; border-right: 1px solid #777; padding: 1px 1px 0; }
.scroller { height: 8px; border: 1px solid #888; border-radius: 3px; background: linear-gradient(#fff, #ddd); overflow: hidden; }
.mode { height: 30px; }
.modes .mode:nth-child(2) { margin-top: 2px; }
.gpx { flex-direction: column; font: bold 7px/6px "DejaVu Sans", sans-serif; }
.more { font-size: 12px; height: 20px; }
.toggles { margin-top: auto; display: flex; flex-direction: column; gap: 1px; }
.toggles button { height: 30px; border: 1px solid transparent; border-radius: 3px; }
.toggles .on { border: 2px solid #777; background: #dcdcdc; }
.toggles .cut { height: 26px; overflow: hidden; }

.map { background: #000; color: #fff; padding: 5px 8px; margin-bottom: 1px; }
.zoom { appearance: none; display: block; width: 104px; height: 18px; margin: 0; background: linear-gradient(#fff, #fff) center / 100% 3px no-repeat; }
.zoom::-webkit-slider-thumb { appearance: none; width: 5px; height: 17px; background: #fff; border: 1px solid #999; }
.scale { width: 101px; height: 12px; margin: 7px 0 0 2px; }
.scale-text { width: 120px; display: flex; justify-content: space-between; margin-left: 1px; }

.panels { display: flex; flex-direction: column; gap: 6px; padding: 0 2px 1px 5px; }
.panel { border: 1px solid #a0a0a0; box-shadow: inset 1px 1px #fff; padding: 0 1px 1px; display: flex; flex-direction: column; }
.panel header { height: 21px; display: flex; align-items: center; padding-left: 1px; }
.panel header .i12 { margin-right: 3px; }
.panel header h2 { flex: 1; padding-left: 7px; line-height: 15px; padding-bottom: 2px; }
.panel header button { margin-left: 1px; }
.box { border: 1px solid #82878f; }
.white { background: #fff; }
.stack, .styles { flex-grow: 1; }
.layer-list { height: 27px; }
.layer { display: flex; align-items: center; gap: 3px; padding-left: 1px; }
.layer-name { flex: 1; height: 17px; display: flex; align-items: center; gap: 4px; padding-left: 1px; background: #3399ff; color: #fff; font-weight: bold; }
.message { min-height: 77px; display: flex; align-items: center; padding-left: 9px; }
.selection .box { min-height: 67px; }
.actions { display: grid; gap: 2px; padding: 1px 1px 0; }
.eight { grid-template-columns: repeat(8, 1fr); }
.four { grid-template-columns: repeat(4, 1fr); }
.three { grid-template-columns: repeat(3, 1fr); }
.two { grid-template-columns: repeat(2, 1fr); }
.actions button { min-width: 0; height: 21px; gap: 4px; border: 1px solid #777; border-radius: 3px; background: linear-gradient(#fff, #ececec 48%, #d6d6d6 52%, #e4e4e4); overflow: hidden; }
.actions button:disabled { color: #888; border-color: #aaa; background: #f3f3f3; }
.two button { height: 18px; padding-right: 4px; }
.two span { flex: 1; display: flex; align-items: center; justify-content: center; gap: 2px; padding-left: 18px; }
.two .tri { color: #000; }

.stack { display: flex; flex-direction: column; }
.folded { border-bottom: 0; padding-bottom: 0; }
.folded header { height: 19px; }
.style-box { flex: 1 0 auto; height: 88px; display: flex; overflow: hidden; }
.style-list { flex: 1; display: flex; flex-direction: column; justify-content: flex-end; overflow: hidden; }
.style-list label { height: 16px; flex: none; display: flex; align-items: center; gap: 2px; }
.style-list span { flex: 1; height: 16px; display: flex; align-items: center; gap: 1px; }
.style-list .spaced { gap: 3px; }
.style-list .current span { background: #3399ff; color: #fff; }
.style-list input { appearance: none; margin: 0 0 0 1px; width: 13px; height: 13px; border: 1px solid #8a8f94; background: linear-gradient(135deg, #cfd3d6, #fafafa) center / 9px 9px no-repeat #f4f4f4; }
.scrollbar { width: 17px; display: flex; flex-direction: column; align-items: stretch; background: #f1f1f1; }
.scrollbar button { height: 18px; }
.thumb { margin-top: auto; height: 9px; border: 1px solid #8f8f8f; border-radius: 2px; background: linear-gradient(90deg, #f8f8f8, #d6d6d6); }
.marked { position: relative; }
.blot { position: absolute; left: 1px; top: 1px; width: 60px; height: 14px; filter: blur(1px); }

.status { display: flex; gap: 3px; padding: 1px 2px 1px; }
.cell { height: 20px; display: flex; align-items: center; gap: 1px; background: #b8cfe5; white-space: nowrap; }
.c-lat { flex: 0 0 91px; }
.c-head { flex: 0 0 60px; }
.c-dist { flex: 0 0 87px; }
.c-name { flex: 0 0 145px; }
.help { flex: 1; min-width: 0; height: 21px; padding: 1px; border: 1px solid #999; overflow: hidden; white-space: nowrap; }
.tooltip { position: absolute; left: 813px; bottom: 0; height: 21px; padding: 2px 5px; border: 1px solid #767676; border-radius: 2px; background: linear-gradient(#fff, #e6e7f1); box-shadow: 2px 2px 3px rgba(0, 0, 0, .5); color: #575757; font: 12px/16px "Open Sans", sans-serif; }
```
